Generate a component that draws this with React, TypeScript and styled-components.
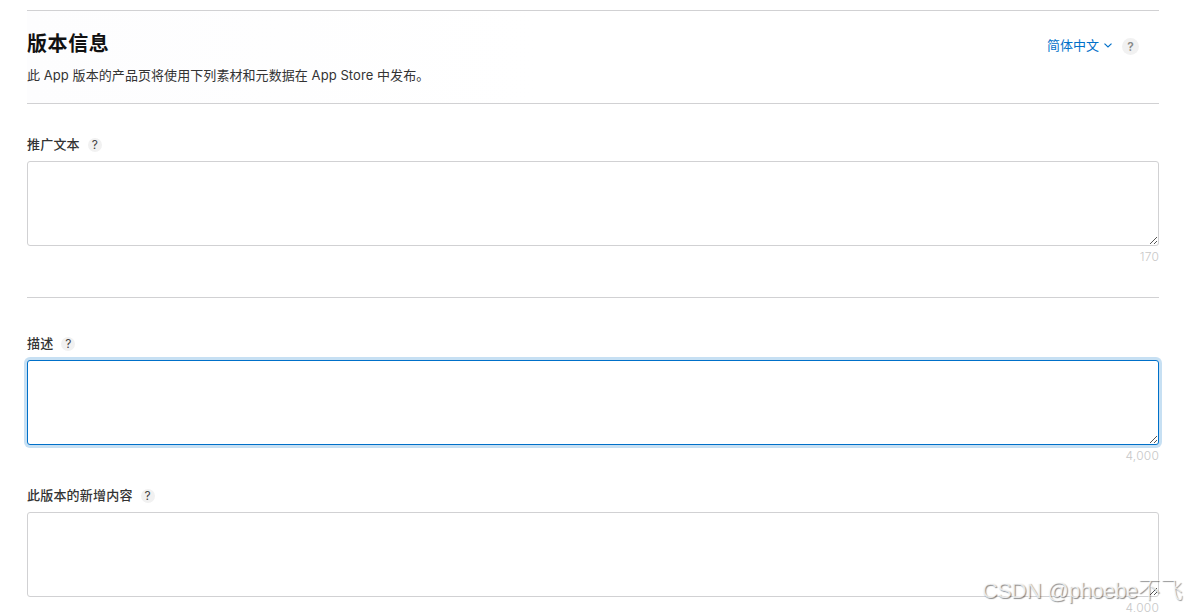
import React, { useState } from "react";
import styled, { createGlobalStyle } from "styled-components";

const App = () => {
  const [focused, setFocused] = useState("description");

  return (
    <Page>
      <GlobalStyle />
      <Header>
        <div>
          <Title>版本信息</Title>
          <Subtitle>
            此 App 版本的产品页将使用下列素材和元数据在 App Store 中发布。
          </Subtitle>
        </div>
        <HeaderActions>
          <LanguageButton type="button">
            简体中文
            <Chevron viewBox="0 0 8 5">
              <path d="M0.5 0.6L4 3.9L7.5 0.6" />
            </Chevron>
          </LanguageButton>
          <HelpButton type="button" $large>
            ?
          </HelpButton>
        </HeaderActions>
      </Header>

      <PromoSection>
        <Field
          name="promo"
          label="推广文本"
          limit="170"
          focused={focused}
          onFocus={setFocused}
        />
      </PromoSection>

      <Section>
        <Field
          name="description"
          label="描述"
          limit="4,000"
          focused={focused}
          onFocus={setFocused}
        />
        <Field
          name="whatsNew"
          label="此版本的新增内容"
          limit="4,000"
          focused={focused}
          onFocus={setFocused}
        />
      </Section>

      <Watermark>
        CSDN @phoebe<span>不飞</span>
      </Watermark>
    </Page>
  );
};

type FieldProps = {
  name: string;
  label: string;
  limit: string;
  focused: string;
  onFocus: (name: string) => void;
};

const Field = ({ name, label, limit, focused, onFocus }: FieldProps) => (
  <FieldWrapper>
    <LabelRow>
      <Label htmlFor={name}>{label}</Label>
      <HelpButton type="button">?</HelpButton>
    </LabelRow>
    <InputWrapper>
      <TextArea
        id={name}
        $active={focused === name}
        onFocus={() => onFocus(name)}
      />
      <Grip viewBox="0 0 8 8" shapeRendering="crispEdges">
        {[0, 1, 2, 3, 4, 5, 6].map((i) => (
          <rect key={i} x={i} y={6 - i} width="1" height="1" />
        ))}
        {[0, 1, 2].map((i) => (
          <rect key={i} x={4 + i} y={6 - i} width="1" height="1" />
        ))}
      </Grip>
    </InputWrapper>
    <Counter>{limit}</Counter>
  </FieldWrapper>
);

export default App;

const GlobalStyle = createGlobalStyle`
  * {
    box-sizing: border-box;
  }

  body {
    margin: 0;
    background: #fff;
    overflow: hidden;
    font-family: Inter, "Noto Sans CJK SC", sans-serif;
    color: #333;
  }
`;

const Page = styled.main`
  position: relative;
  height: 612px;
  padding: 10px 28px 0 27px;
  overflow: hidden;
`;

const Header = styled.header`
  display: flex;
  justify-content: space-between;
  height: 94px;
  padding-top: 20px;
  border-top: 1px solid #d1d1d3;
  border-bottom: 1px solid #d1d1d3;
  background: linear-gradient(90deg, #fdfdfe, #fff 45%);
`;

const Title = styled.h1`
  margin: 0;
  font-size: 20px;
  line-height: 26px;
  font-weight: 700;
  letter-spacing: 0.6px;
  color: #111;
`;

const Subtitle = styled.p`
  margin: 8px 0 0;
  font-size: 13px;
  line-height: 20px;
  letter-spacing: 0.07px;
`;

const HeaderActions = styled.div`
  display: flex;
  align-items: center;
  height: 28px;
  margin-right: 20px;
`;

const LanguageButton = styled.button`
  display: flex;
  align-items: center;
  padding: 0;
  border: none;
  background: none;
  color: #0070c9;
  font-family: inherit;
  font-size: 13px;
  line-height: 20px;
`;

const Chevron = styled.svg`
  width: 8px;
  height: 5px;
  margin: 1px 10px 0 5px;
  fill: none;
  stroke: #0070c9;
  stroke-width: 1.2;
`;

const HelpButton = styled.button<{ $large?: boolean }>`
  display: flex;
  justify-content: center;
  align-items: center;
  width: ${(props) => (props.$large ? "17px" : "14px")};
  height: ${(props) => (props.$large ? "17px" : "14px")};
  margin-top: ${(props) => (props.$large ? "3px" : "1px")};
  padding: 0;
  border: none;
  border-radius: 50%;
  background: #f1f1f1;
  color: ${(props) => (props.$large ? "#888" : "#444")};
  font-family: inherit;
  font-size: 12px;
  font-weight: ${(props) => (props.$large ? 600 : 400)};
  line-height: 14px;
`;

const PromoSection = styled.section`
  height: 194px;
  padding-top: 30px;
  border-bottom: 1px solid #d1d1d3;
`;

const Section = styled.section`
  padding-top: 35px;
`;

const FieldWrapper = styled.div`
  height: 152px;
`;

const LabelRow = styled.div`
  display: flex;
  align-items: center;
  gap: 8px;
  height: 20px;
  margin-bottom: 7px;
`;

const Label = styled.label`
  font-size: 13px;
  line-height: 20px;
  font-weight: 500;
  letter-spacing: 0.2px;
`;

const InputWrapper = styled.div`
  position: relative;
  height: 85px;
`;

const TextArea = styled.textarea<{ $active: boolean }>`
  display: block;
  width: 100%;
  height: 85px;
  padding: 8px;
  border: 1px solid ${(props) => (props.$active ? "#0070c9" : "#d1d1d3")};
  border-radius: 3px;
  box-shadow: ${(props) =>
    props.$active ? "0 0 0 3px rgba(0, 112, 201, 0.22)" : "none"};
  outline: none;
  resize: none;
  font-family: inherit;
  font-size: 13px;
`;

const Grip = styled.svg`
  position: absolute;
  right: 1px;
  bottom: 1px;
  width: 8px;
  height: 8px;
  fill: #555;
  pointer-events: none;
`;

const Counter = styled.div`
  margin-top: 3px;
  text-align: right;
  font-size: 12px;
  line-height: 16px;
  font-weight: 300;
  letter-spacing: 0.2px;
  color: #c8c8c8;
`;

const Watermark = styled.div`
  position: absolute;
  top: 577px;
  left: 982px;
  font-family: "Liberation Sans", "Noto Sans CJK SC", sans-serif;
  font-size: 21.5px;
  line-height: 28px;
  letter-spacing: -0.4px;
  white-space: nowrap;
  color: rgba(255, 255, 255, 0.75);
  text-shadow: 1px 1px 1px rgba(0, 0, 0, 0.45);
  pointer-events: none;

  span {
    font-size: 22.5px;
    font-weight: 300;
    letter-spacing: 0;
  }
`;
